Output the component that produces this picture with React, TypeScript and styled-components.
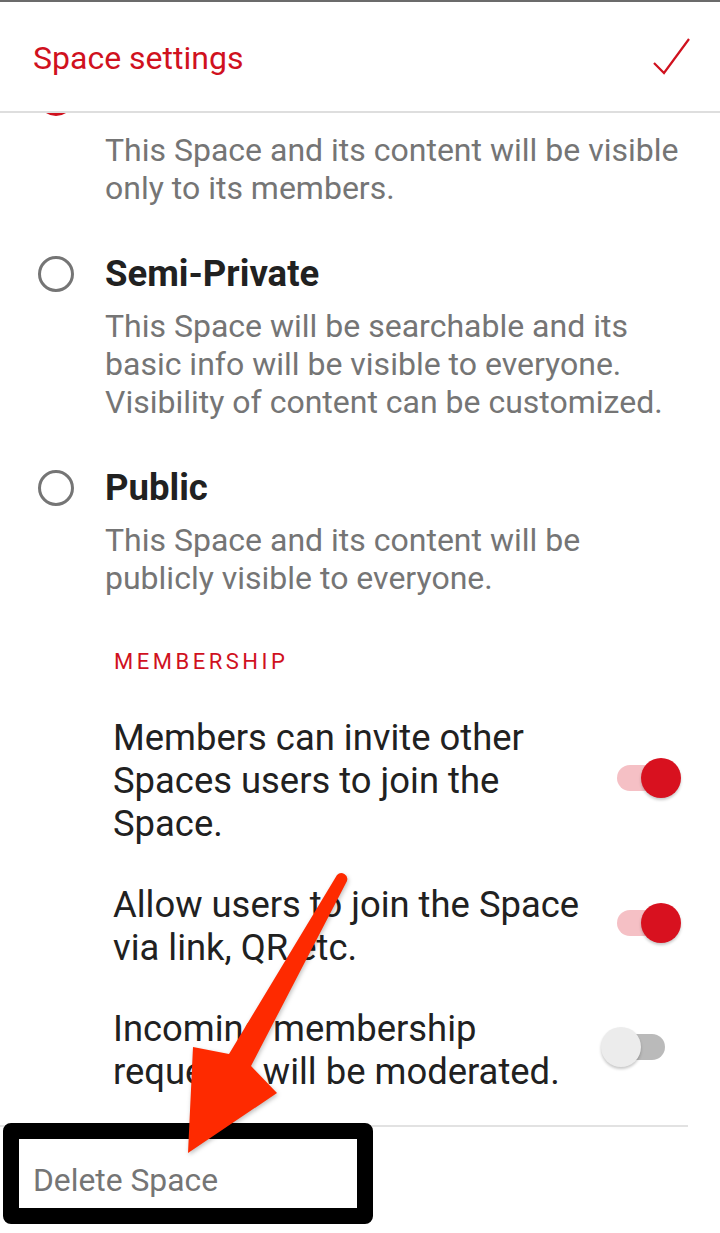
import React, { useLayoutEffect, useRef } from 'react'
import styled, { createGlobalStyle } from 'styled-components'

const GlobalStyle = createGlobalStyle`
  html, body {
    margin: 0;
    padding: 0;
    background: #ffffff;
  }
  body {
    font-family: Roboto, "Noto Sans", "Liberation Sans", sans-serif;
    -webkit-font-smoothing: antialiased;
  }
`

const RED = '#d0111e'

const Page = styled.div`
  position: relative;
  width: 720px;
  height: 1233px;
  display: flex;
  flex-direction: column;
  overflow: hidden;
  background: #fff;
  border-top: 2px solid #6b6b6b;
  box-sizing: border-box;
`

const Header = styled.header`
  height: 109px;
  flex-shrink: 0;
  display: flex;
  align-items: center;
  justify-content: space-between;
  padding: 0 29px 0 33px;
  border-bottom: 2px solid #dedede;
  background: #fff;
`

const Title = styled.h1`
  margin: 0;
  margin-top: 3px;
  font-size: 32px;
  font-weight: 400;
  color: ${RED};
`

const Scroll = styled.div`
  flex: 1;
  overflow: hidden;
`

const List = styled.div`
  padding-top: 20px;
  padding-bottom: 40px;
`

const Options = styled.div`
  display: flex;
  flex-direction: column;
  gap: 47px;
  padding-left: 36px;
`

const Option = styled.div`
  display: grid;
  grid-template-columns: 40px 1fr;
  column-gap: 29px;
  row-gap: 13px;
`

const Radio = styled.span<{ $checked?: boolean }>`
  align-self: center;
  justify-self: center;
  width: 36px;
  height: 36px;
  box-sizing: border-box;
  border-radius: 50%;
  border: 3px solid ${p => (p.$checked ? RED : '#757575')};
  display: flex;
  align-items: center;
  justify-content: center;

  &::after {
    content: '';
    display: ${p => (p.$checked ? 'block' : 'none')};
    width: 18px;
    height: 18px;
    border-radius: 50%;
    background: ${RED};
  }
`

const OptionTitle = styled.div`
  font-size: 36.5px;
  line-height: 40px;
  font-weight: 700;
  color: #212121;
`

const OptionDesc = styled.div`
  grid-column: 2;
  font-size: 32px;
  line-height: 38px;
  color: #757575;
  white-space: nowrap;
`

const SectionLabel = styled.div`
  margin: 53px 0 0 114px;
  font-size: 22px;
  line-height: 24px;
  letter-spacing: 3.5px;
  color: ${RED};
`

const Rows = styled.div`
  display: flex;
  flex-direction: column;
  gap: 38px;
  margin-top: 42px;
`

const Row = styled.div`
  display: flex;
  align-items: center;
  justify-content: space-between;
  padding: 0 39px 0 113px;
`

const RowText = styled.div`
  font-size: 36.4px;
  line-height: 43px;
  color: #212121;
  white-space: nowrap;
`

const Switch = styled.span<{ $on?: boolean }>`
  position: relative;
  width: 80px;
  height: 44px;
  flex-shrink: 0;
  margin-top: -6px;

  &::before {
    content: '';
    position: absolute;
    left: 16px;
    top: 9px;
    width: 48px;
    height: 26px;
    border-radius: 13px;
    background: ${p => (p.$on ? '#f5c0c5' : '#bababa')};
  }

  &::after {
    content: '';
    position: absolute;
    top: 2px;
    left: ${p => (p.$on ? '40px' : '0px')};
    width: 40px;
    height: 40px;
    border-radius: 50%;
    background: ${p => (p.$on ? '#d8111f' : '#ececec')};
    box-shadow: 0 2px 3px rgba(0, 0, 0, 0.22);
  }
`

const Divider = styled.hr`
  margin: 32px 32px 0 0;
  border: none;
  height: 2px;
  background: #e2e2e2;
`

const DeleteRow = styled.div`
  padding: 36px 0 0 33px;
  font-size: 31.8px;
  line-height: 34px;
  color: #757575;
`

const Overlay = styled.div`
  position: absolute;
  inset: 0;
  pointer-events: none;
`

const Highlight = styled.div`
  position: absolute;
  left: 3px;
  top: 1121px;
  width: 370px;
  height: 101px;
  box-sizing: border-box;
  border: 16px solid #000;
  border-radius: 8px;
`

const ArrowSvg = styled.svg`
  position: absolute;
  left: 0;
  top: -2px;
  filter: drop-shadow(1px 2px 2px rgba(0, 0, 0, 0.25));
`

const options = [
  {
    title: 'Private',
    checked: true,
    lines: ['This Space and its content will be visible', 'only to its members.'],
  },
  {
    title: 'Semi-Private',
    lines: [
      'This Space will be searchable and its',
      'basic info will be visible to everyone.',
      'Visibility of content can be customized.',
    ],
  },
  {
    title: 'Public',
    lines: ['This Space and its content will be', 'publicly visible to everyone.'],
  },
]

const toggles = [
  { lines: ['Members can invite other', 'Spaces users to join the', 'Space.'], on: true },
  { lines: ['Allow users to join the Space', 'via link, QR etc.'], on: true },
  { lines: ['Incoming membership', 'requests will be moderated.'], on: false },
]

export default function App() {
  const scrollRef = useRef<HTMLDivElement>(null)

  // the list is scrolled a little, so the first option sits under the header
  useLayoutEffect(() => {
    if (scrollRef.current) scrollRef.current.scrollTop = 55
  }, [])

  return (
    <>
      <GlobalStyle />
      <Page>
        <Header>
          <Title>Space settings</Title>
          <svg width="40" height="40" viewBox="0 0 40 40" fill="none">
            <path d="M3 26 L13 36 L38 2" stroke={RED} strokeWidth="2.2" strokeLinejoin="miter" />
          </svg>
        </Header>

        <Scroll ref={scrollRef}>
          <List>
            <Options>
              {options.map(o => (
                <Option key={o.title}>
                  <Radio $checked={o.checked} />
                  <OptionTitle>{o.title}</OptionTitle>
                  <OptionDesc>
                    {o.lines.map((l, i) => (
                      <div key={i}>{l}</div>
                    ))}
                  </OptionDesc>
                </Option>
              ))}
            </Options>

            <SectionLabel>MEMBERSHIP</SectionLabel>

            <Rows>
              {toggles.map((t, i) => (
                <Row key={i}>
                  <RowText>
                    {t.lines.map((l, j) => (
                      <div key={j}>{l}</div>
                    ))}
                  </RowText>
                  <Switch $on={t.on} />
                </Row>
              ))}
            </Rows>

            <Divider />
            <DeleteRow>Delete Space</DeleteRow>
          </List>
        </Scroll>

        {/* annotation drawn over the screenshot */}
        <Overlay>
          <Highlight />
          <ArrowSvg width="720" height="1233" viewBox="0 0 720 1233">
            <path
              d="M337 875 L229 1054 L193 1047 L188 1153 L277 1093 L251 1066 L347 881 A6 6 0 0 0 337 875 Z"
              fill="#fe2a00"
            />
          </ArrowSvg>
        </Overlay>
      </Page>
    </>
  )
}
